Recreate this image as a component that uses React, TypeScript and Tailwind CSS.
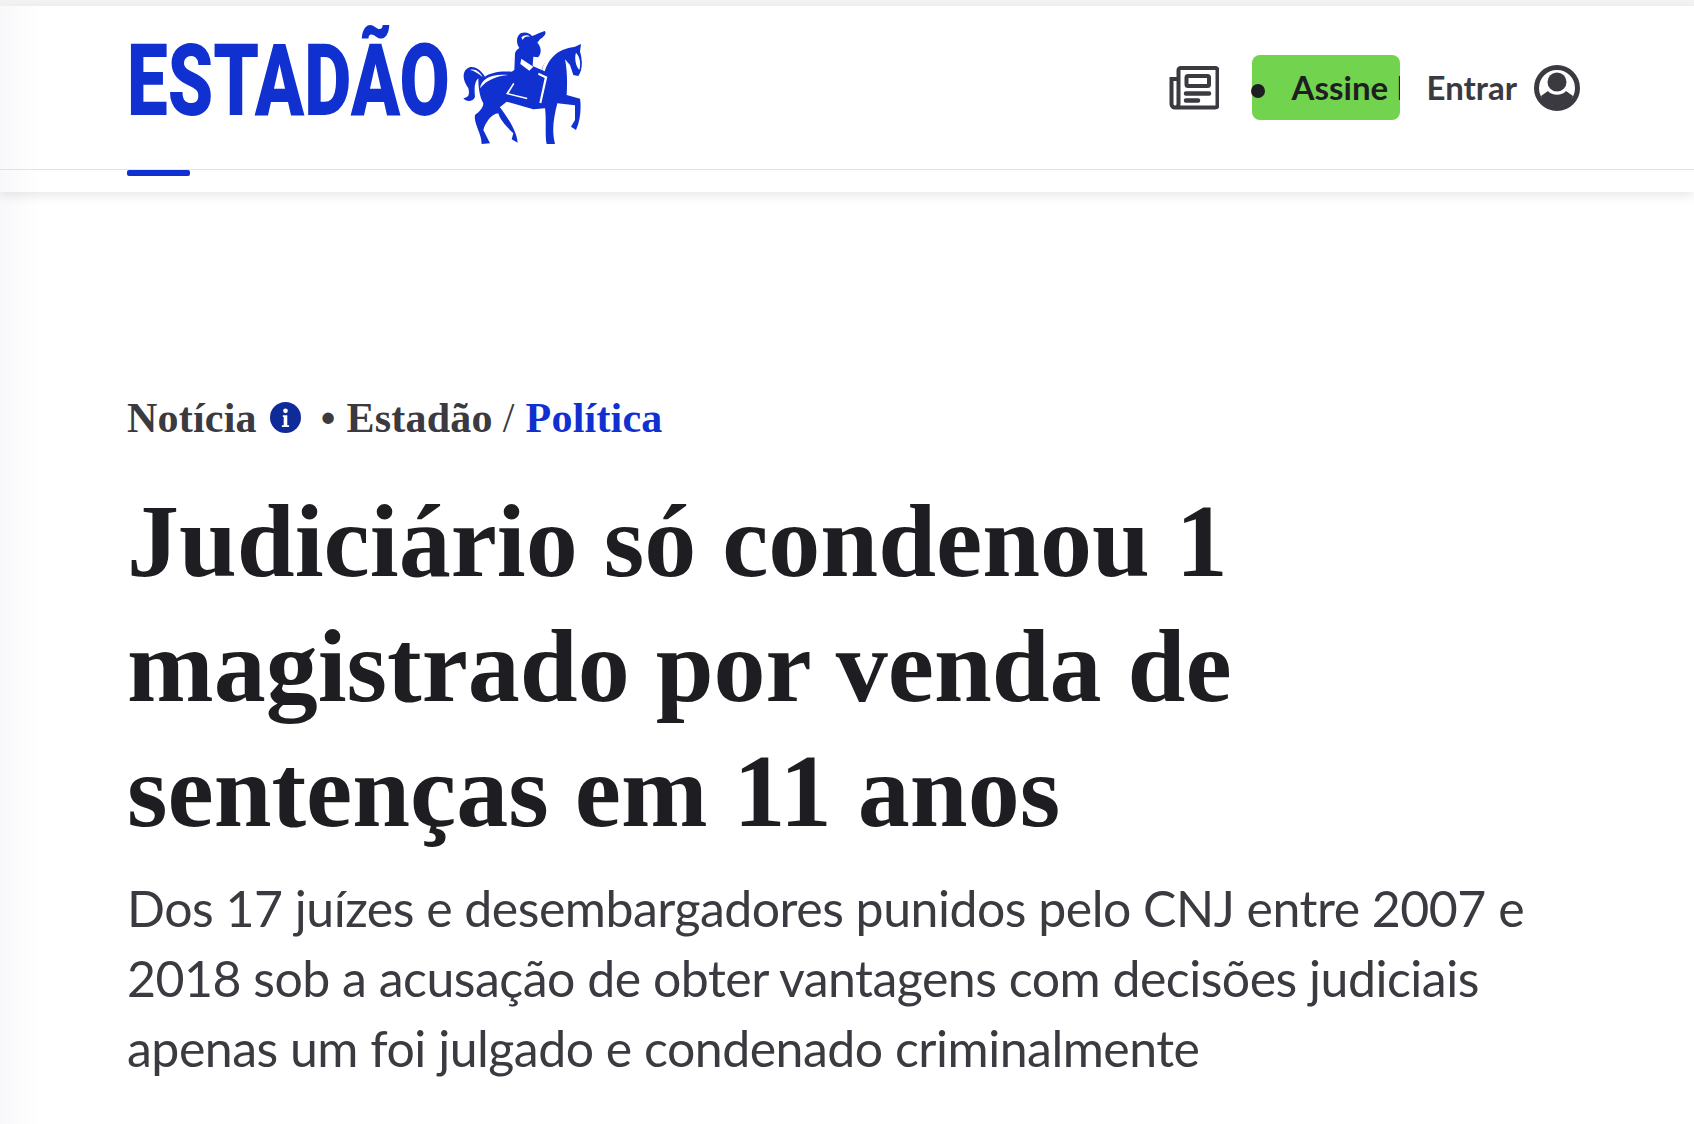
import React from 'react';

const HORSE =
  'M42 160C50 135 80 132 105 170C120 158 150 152 185 155L193 150L195 100C197 92 203 87 208 84C198 70 198 50 212 40C225 34 238 38 246 48C258 44 270 38 284 33C290 38 286 48 270 58L262 68C274 80 276 100 264 112L250 110L248 138L275 150C284 115 320 88 375 80L393 72L390 95C398 120 398 150 385 168L370 165L360 135L345 118C352 150 352 190 350 225L390 236C394 260 392 300 378 330L363 320L375 300L375 256L322 250C312 290 304 330 315 372L290 372C284 350 290 300 285 265L250 268L170 245L150 262C170 290 200 330 203 368L185 358L190 340C170 320 150 300 145 280C125 280 105 310 100 330L120 370L95 372C95 340 70 310 75 285C90 275 100 262 100 250C88 230 85 200 85 175C75 185 72 200 75 230C70 245 50 248 40 235C55 232 60 225 55 205C45 190 38 175 42 160Z';

function HorseLogo() {
  return (
    <svg viewBox="0 0 450 390" className="w-[150px] h-[130px] shrink-0 ml-[7px] mt-[-11px]">
      <path d={HORSE} fill="#1130d0" />
      {/* recortes brancos */}
      <path d="M90 205C95 175 125 160 175 165C140 168 110 180 90 205Z" fill="#fff" />
      <path d="M60 150C75 145 90 155 98 172C85 160 72 152 60 150Z" fill="#fff" />
      <path d="M276 150C285 115 310 92 340 88C315 100 295 120 284 154Z" fill="#fff" />
      <path d="M378 98C372 115 378 140 388 150C392 135 392 112 378 98Z" fill="#fff" />
      <path d="M214 116L250 140L238 152L211 132Z" fill="#fff" />
      <path d="M168 222L190 188L193 192L176 220L232 233L231 238Z" fill="#fff" />
      <path d="M266 158L292 170L274 250L268 248L284 174L264 164Z" fill="#fff" />
      <path d="M150 262L172 245L160 270Z" fill="#fff" />
      <path d="M214 52C222 44 234 44 240 50C230 48 222 50 218 60Z" fill="#fff" />
    </svg>
  );
}

function NewspaperIcon() {
  return (
    <svg viewBox="0 0 50 44" className="w-[50px] h-[44px]" fill="none" stroke="#3a3a40">
      <path d="M9 13H2.5V38C2.5 40 4 41.5 6 41.5H46C47.5 41.5 48.5 40.5 48.5 39V4C48.5 3 47.5 2 46.5 2H11.5C10.5 2 9.5 3 9.5 4V38C9.5 40 8 41.5 6 41.5" strokeWidth="4" />
      <rect x="17.5" y="10" width="22.5" height="10" rx="1.5" strokeWidth="4" />
      <path d="M17 27.5H40M17 34.5H29" strokeWidth="4.5" strokeLinecap="round" />
    </svg>
  );
}

function UserIcon() {
  return (
    <svg viewBox="0 0 46 46" className="w-[46px] h-[46px]">
      <circle cx="23" cy="23" r="20.5" fill="none" stroke="#3a3a40" strokeWidth="5" />
      <circle cx="23" cy="17" r="9.5" fill="#3a3a40" />
      <path d="M7 31L14 26C18 31 28 31 32 26L39 31C35 45 11 45 7 31Z" fill="#3a3a40" />
    </svg>
  );
}

function InfoIcon() {
  return (
    <span className="w-[31px] h-[31px] rounded-full bg-[#0f2a99] flex items-center justify-center ml-[13px] mt-[-1px]">
      <svg viewBox="0 0 10 22" className="w-[9px] h-[22px]">
        <circle cx="5" cy="3" r="2.6" fill="#fff" />
        <path d="M2 8H7V19H9V21H1V19H3V10H2Z" fill="#fff" />
      </svg>
    </span>
  );
}

export default function App() {
  return (
    <div className="min-h-[1124px] bg-[linear-gradient(to_right,#f8f8fa,#ffffff_40px)] overflow-hidden font-['Lato',sans-serif]">
      <div className="h-[6px] bg-[#f2f2f2]" />
      {/* cabeçalho */}
      <header className="shadow-[0_4px_10px_rgba(0,0,0,0.09)]">
        <div className="h-[164px] border-b border-[#e2e2e2] px-[127px] flex justify-between items-start">
          <div className="flex items-start pt-[25px]">
            <div className="w-[316px] h-[100px]">
              <span className="block origin-top-left scale-x-[0.72] text-[101px] leading-[100px] font-black text-[#1130d0] whitespace-nowrap font-['Roboto',sans-serif]">
                ESTADÃO
              </span>
            </div>
            <HorseLogo />
          </div>
          <div className="flex items-center pt-[49px] mr-[-13px]">
            <NewspaperIcon />
            <div className="relative ml-[33px] w-[148px] h-[65px]">
              <span className="absolute left-[-1px] top-[29px] w-[14px] h-[14px] rounded-full bg-[#1e1e22] z-10" />
              <div className="h-full rounded-[8px] bg-[#72d34e] overflow-hidden pl-[40px] flex items-center">
                <span className="text-[33px] font-bold text-[#1e1e22] whitespace-nowrap">Assine E</span>
              </div>
            </div>
            <span className="ml-[27px] text-[33px] font-bold text-[#3a3a40]">Entrar</span>
            <span className="ml-[17px]"><UserIcon /></span>
          </div>
        </div>
        <div className="h-[22px] px-[127px]">
          <div className="w-[63px] h-[6px] rounded-[2px] bg-[#1130d0]" />
        </div>
      </header>

      {/* matéria */}
      <main className="px-[127px] pt-[201px]">
        <div className="flex items-center h-[50px] text-[42px] tracking-[0.2px] font-bold text-[#3a3a40] font-['Liberation_Serif',serif]">
          <span>Notícia</span>
          <InfoIcon />
          <span className="ml-[20px] mr-[11px]">•</span>
          <span>Estadão</span>
          <span className="ml-[10px] mr-[11px] font-normal">/</span>
          <span className="text-[#1130d0]">Política</span>
        </div>
        <h1 className="mt-[35px] text-[104px] leading-[125px] font-bold text-[#1e1e22] w-[1300px] font-['Liberation_Serif',serif]">
          Judiciário só condenou 1 magistrado por venda de sentenças em 11 anos
        </h1>
        <p className="mt-[20px] text-[50px] leading-[70px] text-[#3a3a40] tracking-[-0.5px] w-[1420px]">
          Dos 17 juízes e desembargadores punidos pelo CNJ entre 2007 e 2018 sob a acusação de obter vantagens com decisões judiciais apenas um foi julgado e condenado criminalmente
        </p>
      </main>
    </div>
  );
}
